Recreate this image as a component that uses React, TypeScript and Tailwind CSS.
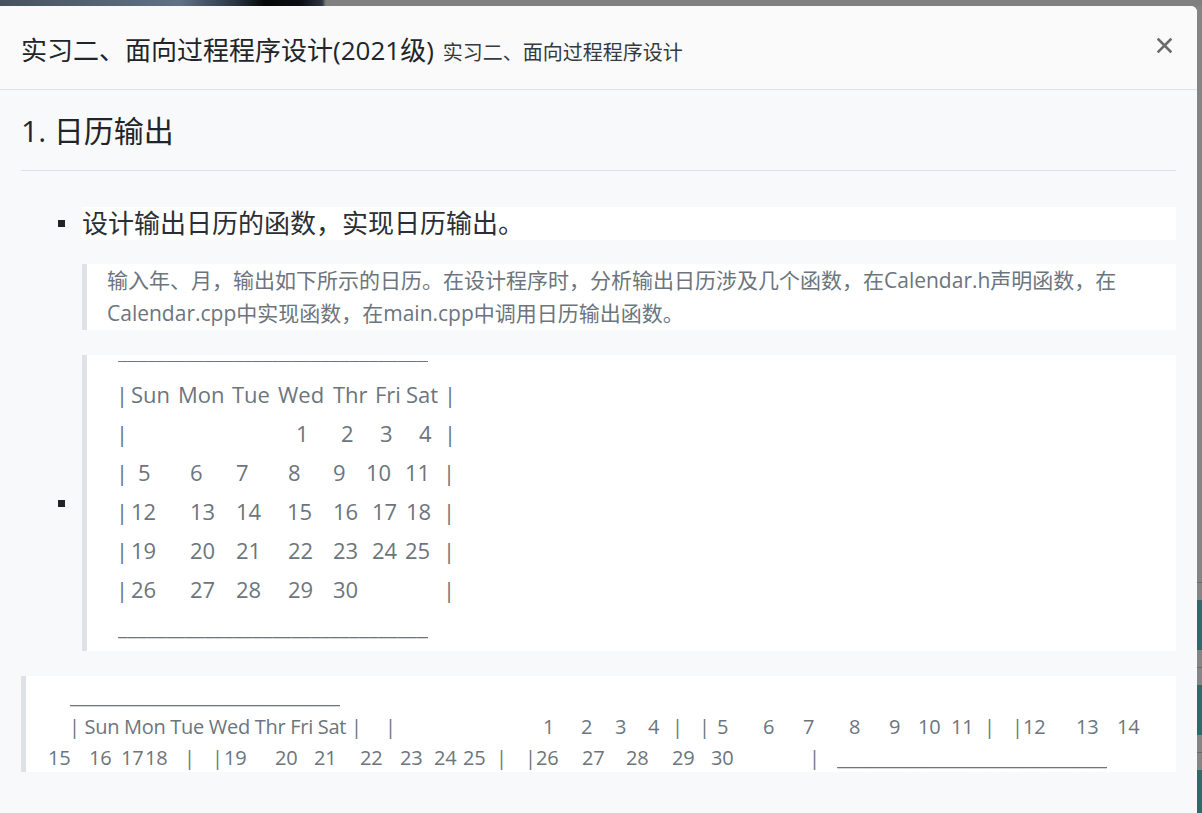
import type { ReactNode } from 'react';

type Cell = [number, ReactNode];

// one text row, each piece starting at its own x (page px)
function Line({ origin, cells, className = '' }: { origin: number; cells: Cell[]; className?: string }) {
  return (
    <div className={`flex whitespace-pre ${className}`}>
      {cells.map(([x, t], i) => {
        const next = cells[i + 1];
        return (
          <span
            key={i}
            className="shrink-0"
            style={{ marginLeft: i === 0 ? x - origin : 0, width: next ? next[0] - x : undefined }}
          >
            {t}
          </span>
        );
      })}
    </div>
  );
}

const bar = '_'.repeat(80);

const calRows: Cell[][] = [
  [[116, '|'], [131, 'Sun'], [178, 'Mon'], [232, 'Tue'], [278, 'Wed'], [333, 'Thr'], [375, 'Fri'], [406, 'Sat'], [444, '|']],
  [[116, '|'], [296, '1'], [341, '2'], [380, '3'], [419, '4'], [444, '|']],
  [[116, '|'], [138, '5'], [190, '6'], [236, '7'], [288, '8'], [333, '9'], [366, '10'], [405, '11'], [443, '|']],
  [[116, '|'], [131, '12'], [190, '13'], [236, '14'], [287, '15'], [333, '16'], [372, '17'], [406, '18'], [443, '|']],
  [[116, '|'], [131, '19'], [190, '20'], [236, '21'], [288, '22'], [333, '23'], [372, '24'], [405, '25'], [443, '|']],
  [[116, '|'], [131, '26'], [190, '27'], [236, '28'], [288, '29'], [333, '30'], [443, '|']],
];

const flatLine2: Cell[] = [
  [69, '| Sun Mon Tue Wed Thr Fri Sat |'], [385, '|'], [543, '1'], [581, '2'], [615, '3'], [648, '4'], [672, '|'],
  [699, '|'], [717, '5'], [763, '6'], [803, '7'], [849, '8'], [889, '9'], [918, '10'], [951, '11'], [984, '|'],
  [1012, '|'], [1023, '12'], [1076, '13'], [1117, '14'],
];

const flatLine3: Cell[] = [
  [48, '15'], [89, '16'], [121, '17'], [145, '18'], [184, '|'], [212, '|'], [224, '19'], [275, '20'], [314, '21'],
  [360, '22'], [400, '23'], [434, '24'], [463, '25'], [496, '|'], [525, '|'], [536, '26'], [582, '27'], [626, '28'],
  [672, '29'], [711, '30'], [809, '|'],
  [837, <span className="block w-[270px] overflow-hidden whitespace-nowrap">{bar}</span>],
];

function Bullet() {
  return <span className="ml-[37px] mr-[17px] h-[7px] w-[7px] shrink-0 bg-[#212529]" />;
}

export default function App() {
  return (
    <div className="h-[813px] w-[1202px] overflow-hidden bg-[#808080] font-['Open_Sans','Noto_Sans_CJK_SC',sans-serif]">
      <div className="h-[6px] bg-[linear-gradient(90deg,#46525f_0px,#5f7285_180px,#2a3644_235px,#05070a_265px,#0b0f14_300px,#2c3440_322px,#808080_326px)]" />

      <div className="flex h-[807px]">
        <div className="flex w-[1197px] flex-col overflow-hidden rounded-tr-[6px] bg-[#f8f9fa]">
          {/* header */}
          <div className="flex h-[84px] shrink-0 items-start justify-between border-b border-[#dee2e6] bg-[#fafafa] pl-[21px] pr-[25px]">
            <div className="mt-[26px] flex items-baseline gap-[9px] leading-[36px]">
              <span className="text-[26px] text-[#212529]">实习二、面向过程程序设计(2021级)</span>
              <span className="text-[20px] text-[#343a40]">实习二、面向过程程序设计</span>
            </div>
            <svg className="mt-[32px]" width="15" height="15" viewBox="0 0 15 15">
              <path d="M1.5 1.5 L13.5 13.5 M13.5 1.5 L1.5 13.5" stroke="#6b6b6b" strokeWidth="2.6" strokeLinecap="square" />
            </svg>
          </div>

          {/* body */}
          <div className="px-[21px]">
            <h1 className="border-b border-[#dee2e6] pb-[19px] pt-[21px] text-[30px] leading-[40px] text-[#212529]">1. 日历输出</h1>

            <ul className="mt-[36px]">
              <li className="flex items-center">
                <Bullet />
                <div className="h-[33px] flex-1 bg-white text-[26px] leading-[33px] text-[#2b2f33]">设计输出日历的函数，实现日历输出。</div>
              </li>
              <blockquote className="ml-[61px] mt-[24px] border-l-[5px] border-[#dee2e6] bg-white pl-[20px] text-[21px] leading-[33px] text-[#6c757d]">
                输入年、月，输出如下所示的日历。在设计程序时，分析输出日历涉及几个函数，在Calendar.h声明函数，在
                <br />
                Calendar.cpp中实现函数，在main.cpp中调用日历输出函数。
              </blockquote>
              <li className="mt-[25px] flex items-center">
                <Bullet />
                <div className="flex h-[296px] flex-1 flex-col border-l-[5px] border-[#dee2e6] bg-white text-[22px] text-[#6c757d]">
                  <div className="flex h-[20px] flex-col pl-[31px]">
                    <span className="-mt-[17px] block w-[310px] overflow-hidden whitespace-nowrap leading-[24px]">{bar}</span>
                  </div>
                  {calRows.map((r, i) => (
                    <Line key={i} origin={87} cells={r} className="h-[39px] leading-[39px]" />
                  ))}
                  <div className="flex h-[42px] flex-col pl-[31px]">
                    <span className="-mt-[2px] block w-[310px] overflow-hidden whitespace-nowrap leading-[39px]">{bar}</span>
                  </div>
                </div>
              </li>
            </ul>

            <blockquote className="mt-[25px] h-[96px] overflow-hidden border-l-[5px] border-[#dee2e6] bg-white pt-[4px] text-[20px] leading-[31px] tracking-[-0.3px] text-[#6c757d]">
              <div className="pl-[44px]">
                <span className="block w-[270px] overflow-hidden whitespace-nowrap">{bar}</span>
              </div>
              <Line origin={26} cells={flatLine2} />
              <Line origin={26} cells={flatLine3} />
            </blockquote>
          </div>
        </div>

        {/* edge of the page behind the dialog */}
        <div className="flex w-[5px] flex-col bg-[#858585]">
          <div className="h-[576px]" />
          <div className="h-px bg-[#6a6a6a]" />
          <div className="h-[17px]" />
          <div className="h-[50px] bg-[#2d6a6e]" />
          <div className="h-[17px]" />
          <div className="h-px bg-[#6a6a6a]" />
          <div className="h-[17px]" />
          <div className="h-[50px] bg-[#2d6a6e]" />
          <div className="h-[17px]" />
          <div className="h-px bg-[#6a6a6a]" />
          <div className="h-[17px]" />
          <div className="flex-1 bg-[#2d6a6e]" />
        </div>
      </div>
    </div>
  );
}
